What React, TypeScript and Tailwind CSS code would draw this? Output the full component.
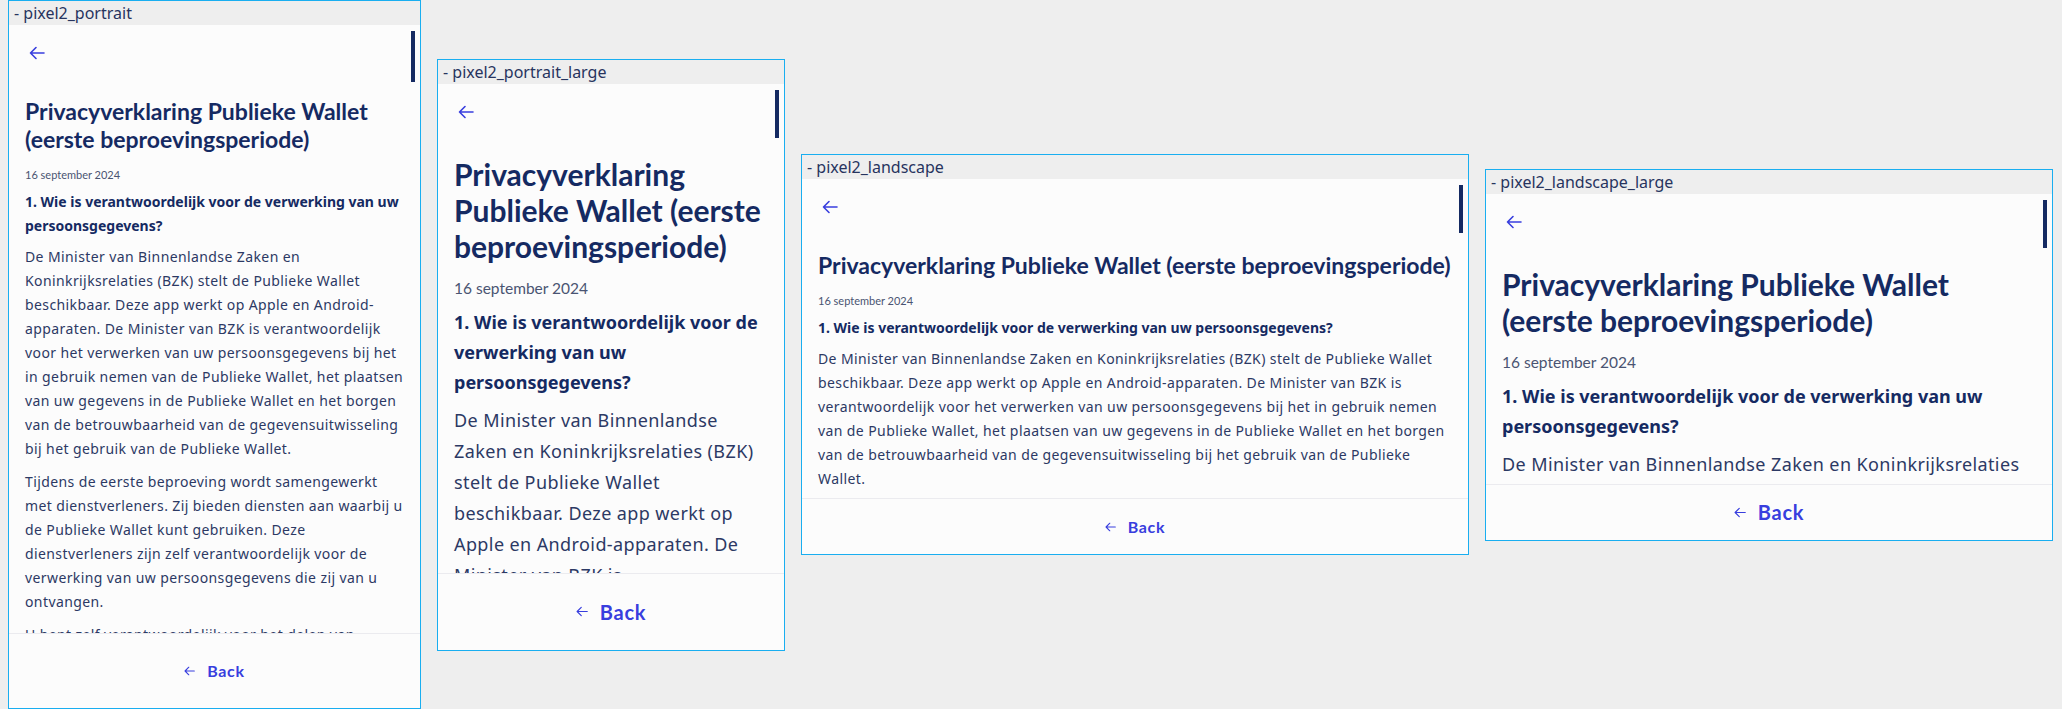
type Size = "base" | "large";

const sizes = {
  base: {
    title: "mt-4 text-[23px] leading-[28px]",
    date: "mt-[14px] text-[11px] leading-4",
    heading: "mt-[7px] text-[14px] leading-6",
    body: "mt-[7px] text-[14px] leading-6",
    paraGap: "mt-[9px]",
    back: "text-[16px] tracking-[0.04em]",
    backArrow: "h-[10px] w-[11px]",
  },
  large: {
    title: "mt-4 text-[30px] leading-9",
    date: "mt-[14px] text-[15.5px] leading-5",
    heading: "mt-[9px] text-[18px] leading-[30px]",
    body: "mt-2 text-[18px] leading-[31px]",
    paraGap: "mt-3",
    back: "text-[20px] tracking-[0.04em]",
    backArrow: "h-[11px] w-[12px]",
  },
};

const Arrow = ({ className }: { className?: string }) => (
  <svg
    viewBox="0 0 16 14"
    fill="none"
    stroke="currentColor"
    strokeWidth={1.6}
    strokeLinecap="round"
    strokeLinejoin="round"
    className={className}
  >
    <path d="M15 7H1.5M7 1.5 1.5 7 7 12.5" />
  </svg>
);

interface PanelProps {
  label: string;
  frame: string;
  size: Size;
  title: string[];
  heading: string[];
  paragraphs: string[][];
  footer: string;
  thumb: string;
}

const Lines = ({ lines }: { lines: string[] }) => (
  <>
    {lines.map((line, i) => (
      <span key={i} className="block whitespace-nowrap">
        {line}
      </span>
    ))}
  </>
);

const Panel = ({ label, frame, size, title, heading, paragraphs, footer, thumb }: PanelProps) => {
  const s = sizes[size];
  return (
    <div className={`flex shrink-0 flex-col border border-[#19aef0] bg-[#fcfcfc] ${frame}`}>
      <div className="h-6 shrink-0 overflow-hidden bg-[#eeeeee] pl-[5px] text-[16px] leading-6 text-[#27345e]">
        - {label}
      </div>
      <div className="relative min-h-0 flex-1 overflow-hidden">
        <div className={`absolute right-[5px] top-[6px] w-1 bg-[#152a62] ${thumb}`} />
        <div className="flex h-14 items-center pl-5">
          <Arrow className="h-[14px] w-4 text-[#383ede]" />
        </div>
        <div className="pl-4">
          <h1 className={`font-['Lato',sans-serif] font-bold text-[#152a62] ${s.title}`}>
            <Lines lines={title} />
          </h1>
          <p className={`font-['Lato',sans-serif] text-[#4a5472] ${s.date}`}>16 september 2024</p>
          <h2 className={`font-bold text-[#152a62] ${s.heading}`}>
            <Lines lines={heading} />
          </h2>
          <div className={`tracking-[0.4px] text-[#2c3964] ${s.body}`}>
            {paragraphs.map((para, i) => (
              <p key={i} className={i > 0 ? s.paraGap : ""}>
                <Lines lines={para} />
              </p>
            ))}
          </div>
        </div>
      </div>
      <div
        className={`flex shrink-0 items-center justify-center gap-3 border-t border-[#ebebef] font-['Lato',sans-serif] text-[#383ede] ${footer}`}
      >
        <Arrow className={s.backArrow} />
        <span className={`font-bold ${s.back}`}>Back</span>
      </div>
    </div>
  );
};

export default function App() {
  return (
    <div className="flex h-[709px] w-[2062px] items-center gap-4 bg-[#eeeeee] pl-2 font-['Noto_Sans',sans-serif]">
      <Panel
        label="pixel2_portrait"
        frame="h-[709px] w-[413px]"
        size="base"
        footer="h-[75px]"
        thumb="h-[51px]"
        title={["Privacyverklaring Publieke Wallet", "(eerste beproevingsperiode)"]}
        heading={["1. Wie is verantwoordelijk voor de verwerking van uw", "persoonsgegevens?"]}
        paragraphs={[
          [
            "De Minister van Binnenlandse Zaken en",
            "Koninkrijksrelaties (BZK) stelt de Publieke Wallet",
            "beschikbaar. Deze app werkt op Apple en Android-",
            "apparaten. De Minister van BZK is verantwoordelijk",
            "voor het verwerken van uw persoonsgegevens bij het",
            "in gebruik nemen van de Publieke Wallet, het plaatsen",
            "van uw gegevens in de Publieke Wallet en het borgen",
            "van de betrouwbaarheid van de gegevensuitwisseling",
            "bij het gebruik van de Publieke Wallet.",
          ],
          [
            "Tijdens de eerste beproeving wordt samengewerkt",
            "met dienstverleners. Zij bieden diensten aan waarbij u",
            "de Publieke Wallet kunt gebruiken. Deze",
            "dienstverleners zijn zelf verantwoordelijk voor de",
            "verwerking van uw persoonsgegevens die zij van u",
            "ontvangen.",
          ],
          ["U bent zelf verantwoordelijk voor het delen van"],
        ]}
      />
      <Panel
        label="pixel2_portrait_large"
        frame="h-[592px] w-[348px]"
        size="large"
        footer="h-[77px]"
        thumb="h-12"
        title={["Privacyverklaring", "Publieke Wallet (eerste", "beproevingsperiode)"]}
        heading={["1. Wie is verantwoordelijk voor de", "verwerking van uw", "persoonsgegevens?"]}
        paragraphs={[
          [
            "De Minister van Binnenlandse",
            "Zaken en Koninkrijksrelaties (BZK)",
            "stelt de Publieke Wallet",
            "beschikbaar. Deze app werkt op",
            "Apple en Android-apparaten. De",
            "Minister van BZK is",
          ],
        ]}
      />
      <Panel
        label="pixel2_landscape"
        frame="h-[401px] w-[668px]"
        size="base"
        footer="h-14"
        thumb="h-12"
        title={["Privacyverklaring Publieke Wallet (eerste beproevingsperiode)"]}
        heading={["1. Wie is verantwoordelijk voor de verwerking van uw persoonsgegevens?"]}
        paragraphs={[
          [
            "De Minister van Binnenlandse Zaken en Koninkrijksrelaties (BZK) stelt de Publieke Wallet",
            "beschikbaar. Deze app werkt op Apple en Android-apparaten. De Minister van BZK is",
            "verantwoordelijk voor het verwerken van uw persoonsgegevens bij het in gebruik nemen",
            "van de Publieke Wallet, het plaatsen van uw gegevens in de Publieke Wallet en het borgen",
            "van de betrouwbaarheid van de gegevensuitwisseling bij het gebruik van de Publieke",
            "Wallet.",
          ],
          ["Tijdens de eerste beproeving wordt samengewerkt met dienstverleners. Zij bieden diensten"],
        ]}
      />
      <Panel
        label="pixel2_landscape_large"
        frame="h-[372px] w-[568px]"
        size="large"
        footer="h-14"
        thumb="h-12"
        title={["Privacyverklaring Publieke Wallet", "(eerste beproevingsperiode)"]}
        heading={["1. Wie is verantwoordelijk voor de verwerking van uw", "persoonsgegevens?"]}
        paragraphs={[
          [
            "De Minister van Binnenlandse Zaken en Koninkrijksrelaties",
            "(BZK) stelt de Publieke Wallet beschikbaar. Deze app werkt",
          ],
        ]}
      />
    </div>
  );
}
